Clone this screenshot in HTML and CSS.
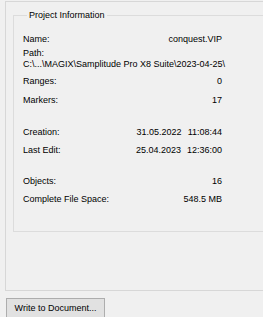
FILE: index.html
```html
<!DOCTYPE html>
<html lang="en">
<head>
    <meta charset="UTF-8">
    <title>Project Information</title>
    <link rel="stylesheet" href="styles.css">
</head>
<body>
    <div class="panel">
        <fieldset class="group">
            <legend>Project Information</legend>
            <div class="row">
                <span>Name:</span>
                <span>conquest.VIP</span>
            </div>
            <div class="path">
                <div>Path:</div>
                <div>C:\...\MAGIX\Samplitude Pro X8 Suite\2023-04-25\</div>
            </div>
            <div class="row gap-s">
                <span>Ranges:</span>
                <span>0</span>
            </div>
            <div class="row gap-m">
                <span>Markers:</span>
                <span>17</span>
            </div>
            <div class="row gap-l">
                <span>Creation:</span>
                <span>31.05.2022<span class="time">11:08:44</span></span>
            </div>
            <div class="row gap-s">
                <span>Last Edit:</span>
                <span>25.04.2023<span class="time">12:36:00</span></span>
            </div>
            <div class="row gap-xl">
                <span>Objects:</span>
                <span>16</span>
            </div>
            <div class="row gap-s">
                <span>Complete File Space:</span>
                <span>548.5 MB</span>
            </div>
        </fieldset>
    </div>
    <button class="write-btn">Write to Document...</button>
</body>
</html>
```

FILE: styles.css
```css
body {
    margin: 0;
    background-color: #f0f0f0;
    font-family: 'Liberation Sans', Arial, sans-serif;
    font-size: 9px;
    line-height: 13px;
    color: #000;
    overflow: hidden;
    height: 317px;
}

.panel {
    margin: 1px 0 0 5px;
    height: 290px;
    border: 1px solid #d7d7d7;
    border-right: none;
    box-sizing: border-box;
    padding-top: 7px;
}

.group {
    margin: 0 0 0 7px;
    padding: 11px 0 25px 9px;
    border: 1px solid #dcdcdc;
    border-right: none;
    min-width: 0;
}

.group legend {
    padding: 0 2px;
    margin-left: 4px;
    line-height: 13px;
}

.row {
    display: flex;
    justify-content: space-between;
    width: 199px;
    height: 13px;
}

.path {
    margin-top: 2px;
    line-height: 11px;
    width: 210px;
    white-space: nowrap;
}

.time {
    margin-left: 6px;
}

.gap-s {
    margin-top: 5px;
}

.gap-m {
    margin-top: 6px;
}

.gap-l {
    margin-top: 19px;
}

.gap-xl {
    margin-top: 18px;
}

.write-btn {
    display: block;
    margin: 7px 0 0 6px;
    width: 99px;
    height: 22px;
    padding: 0 0 3px;
    background-color: #e1e1e1;
    border: 1px solid #adadad;
    border-radius: 0;
    font-family: 'Liberation Sans', Arial, sans-serif;
    font-size: 9px;
    color: #000;
}
```
